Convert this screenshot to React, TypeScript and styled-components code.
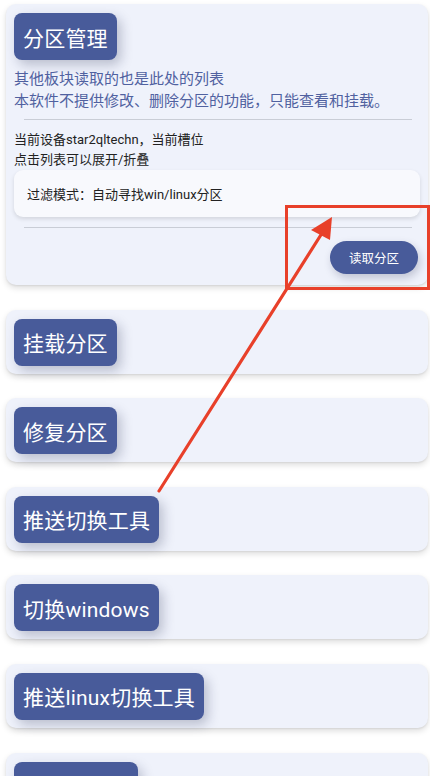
import styled, {createGlobalStyle} from "styled-components";

const GlobalStyle = createGlobalStyle`
    html, body {
        margin: 0;
        padding: 0;
        background: #FFFFFF;
    }
    body {
        font-family: Roboto, "Noto Sans CJK SC", sans-serif;
        overflow: hidden;
    }
`

const Page = styled.div`
    position: relative;
    height: 776px;
    overflow: hidden;
    padding: 4px 2px 0 6px;
    box-sizing: border-box;
    display: flex;
    flex-direction: column;
    gap: 24.6px;
`

const Card = styled.div`
    background: #EFF2FB;
    border-radius: 10px;
    padding: 9px 8px 8px 8px;
    box-shadow: 0 3px 6px 0 #00000022, 0 1px 2px 0 #00000012;
    display: flex;
    flex-direction: column;
    align-items: flex-start;
    flex-shrink: 0;
`

const MainCard = styled(Card)`
    padding-bottom: 11px;
    align-items: stretch;
`

const TitleButton = styled.div`
    align-self: flex-start;
    height: 47px;
    padding: 0 9px;
    box-sizing: border-box;
    display: flex;
    align-items: center;
    background: #485B9A;
    color: #FFFFFF;
    border-radius: 8px;
    font-size: 21px;
    letter-spacing: 0.2px;
    box-shadow: 4px 5px 12px 0 #1A224A40;
`

const InfoText = styled.p`
    margin: 8px 0 0 0;
    color: #5061A0;
    font-size: 15px;
    line-height: 22px;
`

const Divider = styled.div<{top: number}>`
    height: 1px;
    background: #C9CDD6;
    margin: ${p => p.top}px 8px 0 10px;
`

const DeviceText = styled.p`
    margin: 10px 0 0 0;
    color: #222222;
    font-size: 13px;
    line-height: 20px;
`

const FilterBox = styled.div`
    height: 47px;
    border-radius: 9px;
    background: #F8F9FD;
    display: flex;
    align-items: center;
    padding: 0 13px;
    font-size: 13px;
    color: #222222;
    box-shadow: 0 2px 4px 0 #0000001F;
`

const ActionRow = styled.div`
    display: flex;
    justify-content: flex-end;
    margin-top: 13px;
    padding-right: 2px;
`

const PillButton = styled.div`
    width: 88px;
    height: 33px;
    border-radius: 17px;
    background: #485B9A;
    color: #FFFFFF;
    font-size: 12.5px;
    display: flex;
    align-items: center;
    justify-content: center;
    box-shadow: 2px 4px 8px 0 #1A224A38;
`

const Annotation = styled.svg`
    position: absolute;
    left: 0;
    top: 0;
    pointer-events: none;
`

const sections = ['挂载分区', '修复分区', '推送切换工具', '切换windows', '推送linux切换工具', '卸载分区工']

export default function App() {
    return (
        <>
            <GlobalStyle/>
            <Page>
                <MainCard>
                    <TitleButton>分区管理</TitleButton>
                    <InfoText>
                        其他板块读取的也是此处的列表<br/>
                        本软件不提供修改、删除分区的功能，只能查看和挂载。
                    </InfoText>
                    <Divider top={7}/>
                    <DeviceText>
                        当前设备star2qltechn，当前槽位<br/>
                        点击列表可以展开/折叠
                    </DeviceText>
                    <FilterBox>过滤模式：自动寻找win/linux分区</FilterBox>
                    <Divider top={10}/>
                    <ActionRow>
                        <PillButton>读取分区</PillButton>
                    </ActionRow>
                </MainCard>

                {sections.map(s =>
                    <Card key={s}>
                        <TitleButton>{s}</TitleButton>
                    </Card>
                )}

                {/* 红色标注框和箭头 */}
                <Annotation width="430" height="776" viewBox="0 0 430 776">
                    <rect x="286.5" y="206.5" width="142" height="82" fill="none" stroke="#E8402A" strokeWidth="3"/>
                    <line x1="159" y1="491" x2="324" y2="230" stroke="#E8402A" strokeWidth="3.2" strokeLinecap="round"/>
                    <polygon points="332,217 330,240 311,230" fill="#E8402A"/>
                </Annotation>
            </Page>
        </>
    );
}
